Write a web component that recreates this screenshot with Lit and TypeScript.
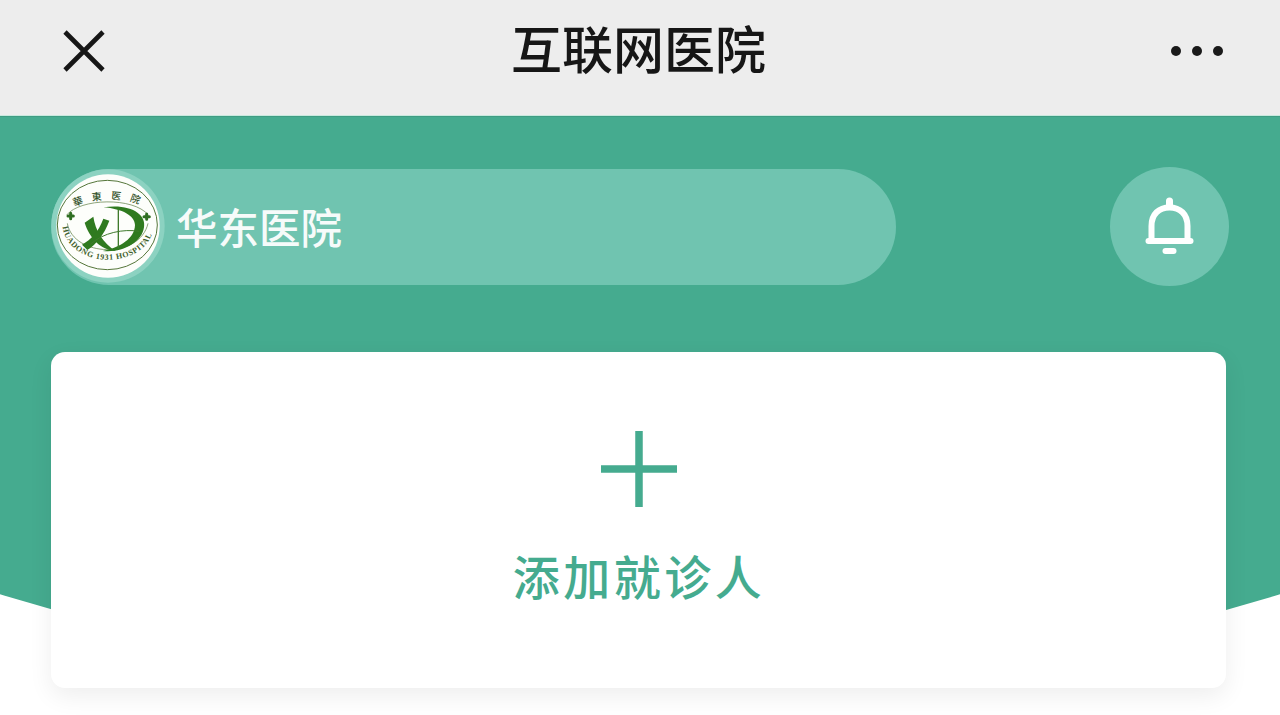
import { LitElement, html, css } from "lit";
import { customElement } from "lit/decorators.js";

@customElement("app-root")
export class AppRoot extends LitElement {
  static styles = css`
    :host { display: block; width: 1280px; height: 715px; overflow: hidden; background: #fff;
      font-family: "Noto Sans CJK SC", "Noto Sans", sans-serif; }
    .nav { height: 116px; background: #ededed; display: grid; grid-template-columns: 1fr auto 1fr; align-items: center; padding: 0 57px 0 62px; box-sizing: border-box; border-bottom: 1px solid #c8e9de; }
    .close { width: 44px; height: 44px; display: block; margin-top: -14px; }
    .title { font-size: 51px; font-weight: 500; color: #161616; line-height: 1; margin-top: -21px; margin-left: -8px; }
    .more { justify-self: end; display: flex; gap: 11px; margin-top: -14px; }
    .more i { width: 10px; height: 10px; border-radius: 50%; background: #1a1a1a; display: block; }
    .main { position: relative; padding: 51px 54px 0 51px; box-sizing: border-box; height: 599px; }
    .main::before { content: ""; position: absolute; left: 0; top: 0; width: 100%; height: 560px; background: #45ab8f;
      box-shadow: inset 0 1px 0 #3f9c83;
      clip-path: circle(2188px at 640px -1614px); }
    .top { position: relative; display: flex; justify-content: space-between; align-items: center; }
    .pill { width: 845px; height: 116px; border-radius: 58px; background: #70c4b0; display: flex; align-items: center; color: #f6fbfa; font-size: 41.5px; font-weight: 500; line-height: 1; }
    .logo { width: 116px; height: 116px; display: block; margin-right: 9px; flex: none; }
    .name { margin-top: 0; }
    .bell { width: 119px; height: 119px; border-radius: 50%; background: #70c4b0; margin-right: -3px; display: flex; align-items: center; justify-content: center; }
    .bell svg { width: 54px; height: 62px; display: block; }
    .card { position: relative; margin-top: 66px; height: 336px; background: #fff; border-radius: 14px;
      box-shadow: 0 8px 24px rgba(0,0,0,.07); display: flex; flex-direction: column; align-items: center; color: #45ab8f; box-sizing: border-box; padding-top: 79px; }
    .plus { width: 76px; height: 76px; display: block; }
    .add { font-size: 47px; line-height: 1; margin-top: 44px; letter-spacing: 3.5px; margin-right: -1px; font-weight: 500; }
  `;

  render() {
    return html`
      <div class="nav">
        <svg class="close" viewBox="0 0 44 44"><path d="M3 3 41 41M41 3 3 41" stroke="#161616" stroke-width="4.6" fill="none"/></svg>
        <div class="title">互联网医院</div>
        <div class="more"><i></i><i></i><i></i></div>
      </div>
      <div class="main">
        <div class="top">
          <div class="pill">
            <svg class="logo" viewBox="3 -3 348 348">
              <circle cx="174" cy="168" r="170" fill="#8cd2c1"/>
              <circle cx="174" cy="168" r="155" fill="#fdfefb"/>
              <ellipse cx="172" cy="165" rx="150" ry="134" fill="none" stroke="#55763a" stroke-width="3"/>
              <path d="M50 135C90 85 250 80 295 135" fill="none" stroke="#55763a" stroke-width="2"/>
              <path d="M52 160C70 262 270 268 294 160" fill="none" stroke="#55763a" stroke-width="2"/>
              <defs>
                <path id="bt" d="M38 170C55 300 290 305 312 170"/>
                <path id="tt" d="M74 112C120 84 215 80 275 106"/>
              </defs>
              <text font-family="Liberation Serif, serif" font-size="24" font-weight="700" fill="#3f5f2c" textLength="345"><textPath href="#bt">HUADONG 1931 HOSPITAL</textPath></text>
              <text font-family="Noto Sans CJK TC, sans-serif" font-size="30" fill="#33522a" letter-spacing="26"><textPath href="#tt">華東医院</textPath></text>
              <path d="M62 130V146M54 138H70M290 132V148M282 140H298" fill="none" stroke="#2f6e22" stroke-width="9" stroke-linecap="round"/>
              <path d="M160 112C240 100 290 132 282 172C276 218 215 250 158 243C212 232 254 205 255 165C254 137 218 117 160 112Z" fill="#2f7a1f"/>
              <path d="M104 158 130 140C136 180 158 220 198 243C150 240 118 202 104 158Z" fill="#2f7a1f"/>
              <path d="M96 224C124 208 146 184 160 146L178 152C162 194 140 222 112 240Z" fill="#2f7a1f"/>
              <path d="M122 222C160 188 220 176 268 184" fill="none" stroke="#3f7a2c" stroke-width="3"/>
              <path d="M205 118V236" fill="none" stroke="#3f7a2c" stroke-width="4"/>
            </svg>
            <span class="name">华东医院</span>
          </div>
          <div class="bell">
            <svg viewBox="0 0 54 62">
              <path d="M8.5 43V30C8.5 18 16 11.5 26.5 11.5S44.5 18 44.5 30V43" fill="none" stroke="#fff" stroke-width="6"/>
              <path d="M5.5 45H47.5" stroke="#fff" stroke-width="6" stroke-linecap="round"/>
              <path d="M26.5 5V9" stroke="#fff" stroke-width="7" stroke-linecap="round"/>
              <path d="M22.5 55H30.5" stroke="#fff" stroke-width="6" stroke-linecap="round"/>
            </svg>
          </div>
        </div>
        <div class="card">
          <svg class="plus" viewBox="0 0 76 76"><path d="M38 0V76M0 38H76" stroke="#45ab8f" stroke-width="7.5" fill="none"/></svg>
          <div class="add">添加就诊人</div>
        </div>
      </div>
    `;
  }
}
